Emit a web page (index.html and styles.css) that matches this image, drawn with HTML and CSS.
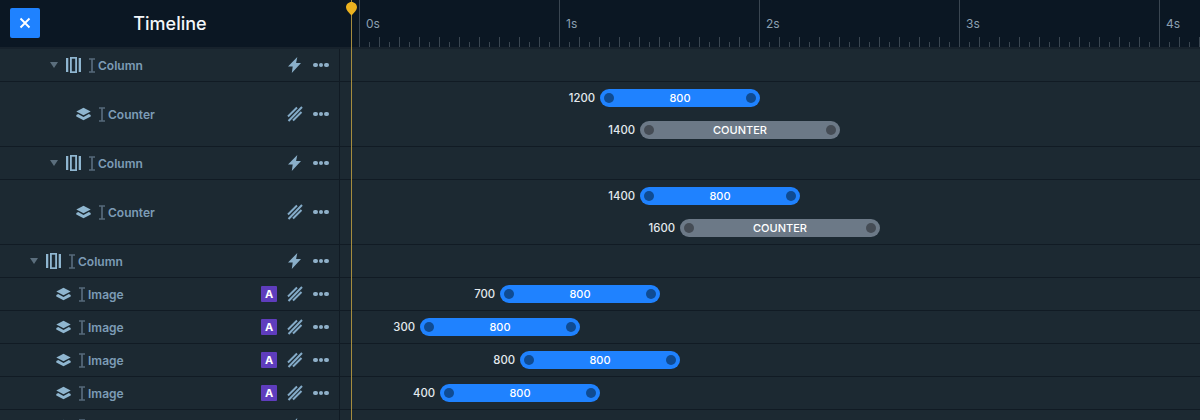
FILE: index.html
```html
<!DOCTYPE html>
<html lang="en">
<head>
<meta charset="utf-8">
<title>Timeline</title>
<link rel="stylesheet" href="styles.css">
</head>
<body>
<svg class="defs" width="0" height="0" aria-hidden="true">
  <symbol id="i-column" viewBox="0 0 15 16">
    <path d="M0 1h2.300v14H0zM12.700 1H15v14h-2.300z" fill="currentColor"/>
    <rect x="4.900" y="0.800" width="5.200" height="14.400" fill="none" stroke="currentColor" stroke-width="1.800"/>
  </symbol>
  <symbol id="i-layers" viewBox="0 0 15 14">
    <path d="M7.500 0.800 14.700 4.500 7.500 8.300 0.300 4.500z" fill="currentColor"/>
    <path d="M2.200 7.100 7.500 9.900 12.800 7.100 14.700 8.100V9.500L7.500 13.300 0.300 9.500V8.100z" fill="currentColor"/>
  </symbol>
  <symbol id="i-beam" viewBox="0 0 6 15">
    <path d="M0 1h6M0 14h6M3 1v13" fill="none" stroke="currentColor" stroke-width="1.700"/>
  </symbol>
  <symbol id="i-bolt" viewBox="0 0 13 16">
    <path d="M9.300 0 0 9.500H4.700L3.800 16 13 6H8.100z" fill="currentColor"/>
  </symbol>
  <symbol id="i-slashes" viewBox="0 0 16 16">
    <path d="M1 10.500 10 1.500M1.500 15 15 1M6 14.500 14.500 6" fill="none" stroke="currentColor" stroke-width="2"/>
  </symbol>
</svg>

<div class="app">
  <header class="top">
    <div class="top-left">
      <button class="close" type="button" aria-label="Close">
        <svg width="12" height="12" viewBox="0 0 12 12"><path d="M1.500 1.500l9 9M10.500 1.500l-9 9" stroke="#fff" stroke-width="1.900" fill="none"/></svg>
      </button>
      <h1 class="title">Timeline</h1>
    </div>
    <div class="ruler">
      <div class="sec">0s</div>
      <div class="sec">1s</div>
      <div class="sec">2s</div>
      <div class="sec">3s</div>
      <div class="sec">4s</div>
    </div>
  </header>

  <main class="rows">
    <section class="row">
      <div class="tree depth-1"><span class="caret"></span><svg class="ic-type"><use href="#i-column"/></svg><svg class="ic-beam"><use href="#i-beam"/></svg><span class="name">Column</span>
        <div class="actions"><svg class="ic-bolt"><use href="#i-bolt"/></svg><span class="dots"><i></i><i></i><i></i></span></div></div>
      <div class="track"></div>
    </section>
    <section class="row">
      <div class="tree depth-1 leaf"><svg class="ic-type layers"><use href="#i-layers"/></svg><svg class="ic-beam"><use href="#i-beam"/></svg><span class="name">Counter</span>
        <div class="actions"><svg class="ic-slash"><use href="#i-slashes"/></svg><span class="dots"><i></i><i></i><i></i></span></div></div>
      <div class="track stack">
        <div class="lane" style="--delay:1200"><span class="delay">1200</span><div class="bar"><b></b>800<b></b></div></div>
        <div class="lane" style="--delay:1400"><span class="delay">1400</span><div class="bar grey wide"><b></b>COUNTER<b></b></div></div>
      </div>
    </section>
    <section class="row">
      <div class="tree depth-1"><span class="caret"></span><svg class="ic-type"><use href="#i-column"/></svg><svg class="ic-beam"><use href="#i-beam"/></svg><span class="name">Column</span>
        <div class="actions"><svg class="ic-bolt"><use href="#i-bolt"/></svg><span class="dots"><i></i><i></i><i></i></span></div></div>
      <div class="track"></div>
    </section>
    <section class="row">
      <div class="tree depth-1 leaf"><svg class="ic-type layers"><use href="#i-layers"/></svg><svg class="ic-beam"><use href="#i-beam"/></svg><span class="name">Counter</span>
        <div class="actions"><svg class="ic-slash"><use href="#i-slashes"/></svg><span class="dots"><i></i><i></i><i></i></span></div></div>
      <div class="track stack">
        <div class="lane" style="--delay:1400"><span class="delay">1400</span><div class="bar"><b></b>800<b></b></div></div>
        <div class="lane" style="--delay:1600"><span class="delay">1600</span><div class="bar grey wide"><b></b>COUNTER<b></b></div></div>
      </div>
    </section>
    <section class="row">
      <div class="tree depth-0"><span class="caret"></span><svg class="ic-type"><use href="#i-column"/></svg><svg class="ic-beam"><use href="#i-beam"/></svg><span class="name">Column</span>
        <div class="actions"><svg class="ic-bolt"><use href="#i-bolt"/></svg><span class="dots"><i></i><i></i><i></i></span></div></div>
      <div class="track"></div>
    </section>
    <section class="row">
      <div class="tree depth-0 leaf"><svg class="ic-type layers"><use href="#i-layers"/></svg><svg class="ic-beam"><use href="#i-beam"/></svg><span class="name">Image</span>
        <div class="actions"><span class="badge">A</span><svg class="ic-slash"><use href="#i-slashes"/></svg><span class="dots"><i></i><i></i><i></i></span></div></div>
      <div class="track stack">
        <div class="lane" style="--delay:700"><span class="delay">700</span><div class="bar"><b></b>800<b></b></div></div>
      </div>
    </section>
    <section class="row">
      <div class="tree depth-0 leaf"><svg class="ic-type layers"><use href="#i-layers"/></svg><svg class="ic-beam"><use href="#i-beam"/></svg><span class="name">Image</span>
        <div class="actions"><span class="badge">A</span><svg class="ic-slash"><use href="#i-slashes"/></svg><span class="dots"><i></i><i></i><i></i></span></div></div>
      <div class="track stack">
        <div class="lane" style="--delay:300"><span class="delay">300</span><div class="bar"><b></b>800<b></b></div></div>
      </div>
    </section>
    <section class="row">
      <div class="tree depth-0 leaf"><svg class="ic-type layers"><use href="#i-layers"/></svg><svg class="ic-beam"><use href="#i-beam"/></svg><span class="name">Image</span>
        <div class="actions"><span class="badge">A</span><svg class="ic-slash"><use href="#i-slashes"/></svg><span class="dots"><i></i><i></i><i></i></span></div></div>
      <div class="track stack">
        <div class="lane" style="--delay:800"><span class="delay">800</span><div class="bar"><b></b>800<b></b></div></div>
      </div>
    </section>
    <section class="row">
      <div class="tree depth-0 leaf"><svg class="ic-type layers"><use href="#i-layers"/></svg><svg class="ic-beam"><use href="#i-beam"/></svg><span class="name">Image</span>
        <div class="actions"><span class="badge">A</span><svg class="ic-slash"><use href="#i-slashes"/></svg><span class="dots"><i></i><i></i><i></i></span></div></div>
      <div class="track stack">
        <div class="lane" style="--delay:400"><span class="delay">400</span><div class="bar"><b></b>800<b></b></div></div>
      </div>
    </section>
    <section class="row">
      <div class="tree depth-0 leaf"><svg class="ic-type layers"><use href="#i-layers"/></svg><svg class="ic-beam"><use href="#i-beam"/></svg>
        <div class="actions"><svg class="ic-bolt"><use href="#i-bolt"/></svg><span class="dots"><i></i><i></i><i></i></span></div></div>
      <div class="track"></div>
    </section>
  </main>

  <div class="playhead">
    <svg class="playhead-knob" width="11" height="14" viewBox="0 0 11 14"><path d="M5.500 0C2.500 0 0 2.400 0 5.300 0 8 2.600 10.400 5.500 13.500 8.400 10.400 11 8 11 5.300 11 2.400 8.500 0 5.500 0z" fill="#ecb21f"/></svg>
  </div>
</div>
</body>
</html>
```
FILE: styles.css
```css
* { box-sizing: border-box; }
html, body { margin: 0; height: 100%; }
body {
  background: #1c2932;
  font-family: Inter, "Liberation Sans", sans-serif;
  overflow: hidden;
}
.defs { position: absolute; }
.app { position: relative; height: 420px; overflow: hidden; }

/* header */
.top {
  display: flex;
  height: 49px;
  background: #0b1723;
  border-bottom: 2px solid #17222c;
}
.top-left {
  position: relative;
  flex: 0 0 340px;
  display: flex;
  align-items: center;
  padding-left: 10px;
}
.close {
  display: flex;
  align-items: center;
  justify-content: center;
  width: 30px;
  height: 30px;
  margin-top: -1px;
  padding: 0;
  border: 0;
  border-radius: 2px;
  background: #1f82ff;
}
.title {
  flex: 1;
  margin: 0 40px 0 0;
  text-align: center;
  font-size: 18px;
  line-height: 47px;
  font-weight: 500;
  color: #f3f6f9;
}
.ruler {
  flex: 1;
  display: flex;
  padding-left: 19px;
  overflow: hidden;
}
.sec {
  flex: 0 0 200px;
  height: 47px;
  padding: 16px 0 0 6px;
  font-size: 12px;
  line-height: 16px;
  font-weight: 400;
  color: #8ba0b1;
  border-left: 1px solid #3a4651;
  background-image:
    linear-gradient(to right, #3a4651 1px, transparent 1px),
    linear-gradient(to right, #3a4651 1px, transparent 1px);
  background-repeat: repeat-x;
  background-size: 20px 10px, 20px 5px;
  background-position: 19px 100%, 9px 100%;
}

/* rows */
.rows { display: flex; flex-direction: column; }
.row {
  display: flex;
  flex: none;
  border-bottom: 1px solid #111b24;
}
.tree {
  flex: 0 0 340px;
  display: flex;
  align-items: center;
  border-right: 1px solid #111b24;
  color: #7fa0ba;
  padding-right: 10px;
}
.depth-0 { padding-left: 30px; }
.depth-1 { padding-left: 50px; }
.depth-0.leaf { padding-left: 56px; }
.depth-1.leaf { padding-left: 76px; }
.caret {
  width: 0;
  height: 0;
  margin-right: 8px;
  border-left: 4.500px solid transparent;
  border-right: 4.500px solid transparent;
  border-top: 6px solid #5b6e7d;
}
.ic-type { width: 15px; height: 16px; color: #8fb6d0; }
.ic-type.layers { height: 14px; }
.ic-beam { width: 6px; height: 15px; margin-left: 8px; color: #56697b; }
.name {
  margin: 2px 0 0 3px;
  font-size: 12px;
  line-height: 16px;
  font-weight: 600;
  color: #7c9cb6;
}
.actions {
  margin-left: auto;
  display: flex;
  align-items: center;
}
.badge {
  display: flex;
  align-items: center;
  justify-content: center;
  width: 16px;
  height: 16px;
  margin-right: 10px;
  border-radius: 1px;
  background: #5f3dbd;
  color: #fff;
  font-size: 11px;
  font-weight: 700;
}
.ic-bolt { width: 13px; height: 16px; margin-right: 12px; color: #8aafc9; }
.ic-slash { width: 16px; height: 16px; margin-right: 10px; color: #84abc8; }
.dots { display: flex; gap: 0.800px; width: 16px; }
.dots i {
  flex: none;
  width: 4.800px;
  height: 4.800px;
  border-radius: 50%;
  background: #8fb0c9;
}

/* timeline tracks */
.track {
  flex: 1;
  min-height: 32px;
  padding-left: 20px;
}
.stack {
  display: flex;
  flex-direction: column;
  gap: 14px;
  padding-top: 7px;
  padding-bottom: 7px;
}
.lane {
  position: relative;
  height: 18px;
  margin-left: calc(var(--delay) * 0.2px);
}
.delay {
  position: absolute;
  right: 100%;
  top: 0;
  margin-right: 5px;
  font-size: 11.300px;
  line-height: 18px;
  font-weight: 500;
  color: #e4e9ee;
}
.bar {
  display: flex;
  align-items: center;
  justify-content: space-between;
  width: 160px;
  height: 18px;
  padding: 0 4px;
  border-radius: 9px;
  background: #1f82ff;
  color: #fff;
  font-size: 11px;
  font-weight: 500;
}
.bar b {
  width: 10px;
  height: 10px;
  border-radius: 50%;
  background: #0f4b92;
}
.bar.wide { width: 200px; }
.bar.grey { background: #6c7987; }
.bar.grey b { background: #454c55; }

/* playhead */
.playhead {
  position: absolute;
  top: 0;
  bottom: 0;
  left: 351px;
  width: 1px;
  background: #a58c3e;
}
.playhead-knob {
  position: absolute;
  top: 2px;
  left: -5px;
}
```
